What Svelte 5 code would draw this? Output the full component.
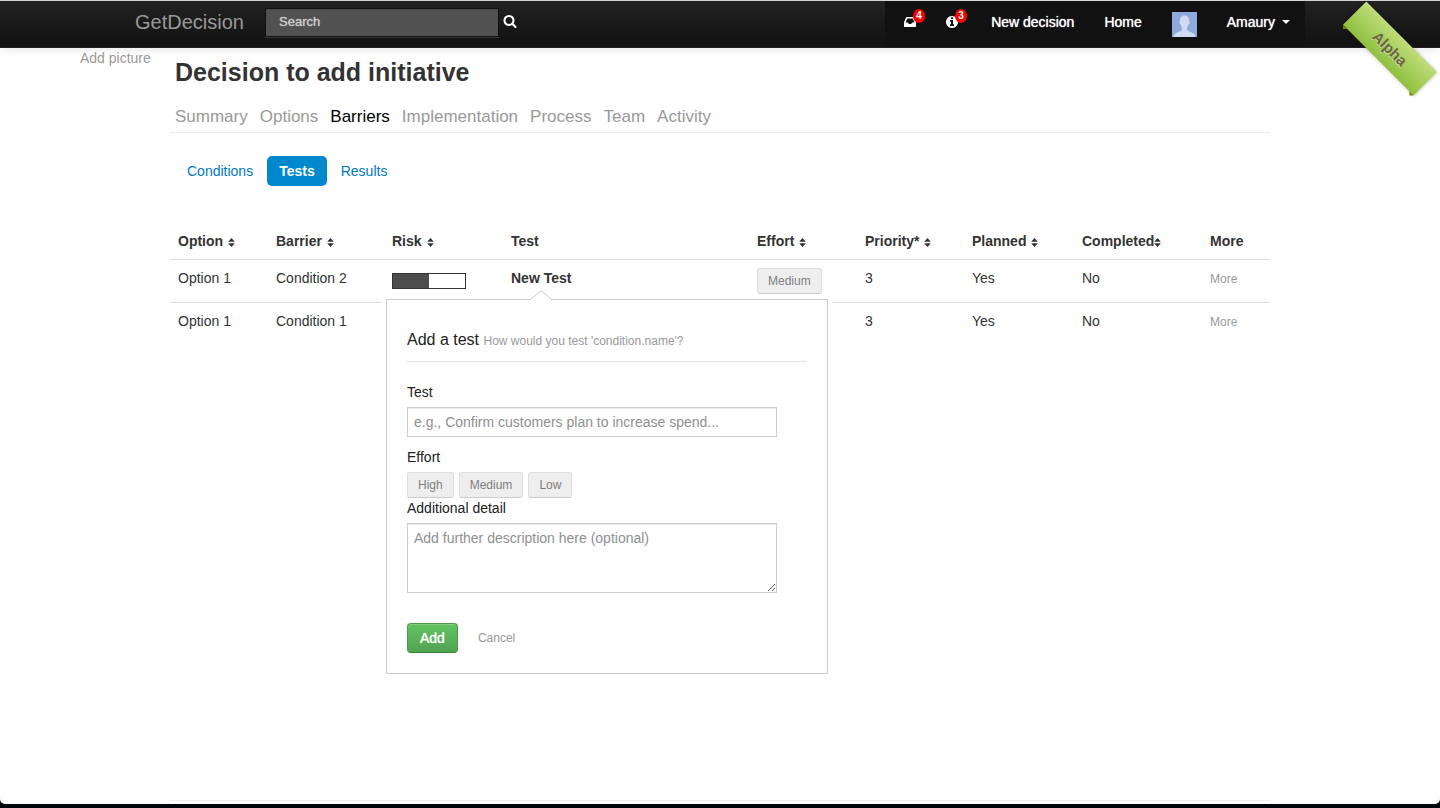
<script>
  const sections = ['Summary', 'Options', 'Barriers', 'Implementation', 'Process', 'Team', 'Activity'];
  const views = ['Conditions', 'Tests', 'Results'];
  const efforts = ['High', 'Medium', 'Low'];

  const columns = [
    { key: 'option', label: 'Option', sortable: true },
    { key: 'barrier', label: 'Barrier', sortable: true },
    { key: 'risk', label: 'Risk', sortable: true },
    { key: 'test', label: 'Test' },
    { key: 'effort', label: 'Effort', sortable: true },
    { key: 'priority', label: 'Priority*', sortable: true },
    { key: 'planned', label: 'Planned', sortable: true },
    { key: 'completed', label: 'Completed', sortable: true, tight: true },
    { key: 'more', label: 'More' }
  ];

  const rows = [
    { option: 'Option 1', barrier: 'Condition 2', risk: 50, test: 'New Test', effort: 'Medium', priority: 3, planned: 'Yes', completed: 'No' },
    { option: 'Option 1', barrier: 'Condition 1', priority: 3, planned: 'Yes', completed: 'No' }
  ];

  let section = $state('Barriers');
  let view = $state('Tests');
</script>

<div class="page">
  <header class="navbar">
    <div class="bar">
      <a class="brand" href="#home">GetDecision</a>
      <form class="search" onsubmit={(e) => e.preventDefault()}>
        <input type="text" placeholder="Search" aria-label="Search" />
        <button aria-label="Submit search">
          <svg viewBox="0 0 1792 1792" width="14" height="14"><path d="M1216 832q0-185-131.500-316.500t-316.500-131.500-316.500 131.500-131.500 316.500 131.500 316.500 316.500 131.500 316.500-131.500 131.500-316.500zm512 832q0 52-38 90t-90 38q-54 0-90-38l-343-342q-179 124-399 124-143 0-273.500-55.500t-225-150-150-225-55.500-273.500 55.500-273.500 150-225 225-150 273.500-55.500 273.500 55.500 225 150 150 225 55.500 273.500q0 220-124 399l343 343q37 37 37 90z" /></svg>
        </button>
      </form>
      <nav class="menu" aria-label="Account">
        <a class="inbox" href="#inbox" aria-label="Inbox">
          <svg viewBox="128 0 1536 1792" width="12" height="14"><path d="M1151 960h316q-1-3-2.500-8t-2.500-8l-212-496h-708l-212 496q-1 2-2.500 8t-2.500 8h316l95 192h320zm513 30v482q0 26-19 45t-45 19h-1408q-26 0-45-19t-19-45v-482q0-62 25-123l238-552q10-25 36.500-42t52.500-17h832q26 0 52.500 17t36.500 42l238 552q25 61 25 123z" /></svg>
          <span class="badge">4</span>
        </a>
        <a class="info" href="#notices" aria-label="Notices">
          <svg viewBox="128 0 1536 1792" width="12" height="14"><path d="M1152 1376v-160q0-14-9-23t-23-9h-96v-512q0-14-9-23t-23-9h-320q-14 0-23 9t-9 23v160q0 14 9 23t23 9h96v320h-96q-14 0-23 9t-9 23v160q0 14 9 23t23 9h448q14 0 23-9t9-23zm-128-896v-160q0-14-9-23t-23-9h-192q-14 0-23 9t-9 23v160q0 14 9 23t23 9h192q14 0 23-9t9-23zm640 416q0 209-103 385.500t-279.500 279.500-385.500 103-385.500-103-279.500-279.500-103-385.500 103-385.500 279.500-279.500 385.500-103 385.500 103 279.500 279.500 103 385.500z" /></svg>
          <span class="badge">3</span>
        </a>
        <a href="#new">New decision</a>
        <a href="#home">Home</a>
        <a class="avatar" href="#profile" aria-label="Profile">
          <svg viewBox="0 0 25 25" width="25" height="25">
            <rect width="25" height="25" fill="#8faadc" />
            <path fill="#d0dbef" d="M12.500 3.500c3 0 4.700 2.100 4.700 5 0 .6.500.8.400 1.700-.1 1-.7 1.400-1 2-.4 1.400-1 2.300-1.600 3v2.300c.4 1.500 2.200 2 4.300 2.800 2.200.8 3.800 2 4.300 4.700H1.400c.5-2.700 2.100-3.900 4.300-4.700 2.100-.8 3.900-1.300 4.300-2.800v-2.300c-.6-.7-1.200-1.600-1.600-3-.3-.6-.9-1-1-2-.1-.9.400-1.100.4-1.700 0-2.900 1.700-5 4.700-5z" />
          </svg>
        </a>
        <a class="user" href="#account">Amaury <span class="caret"></span></a>
      </nav>
    </div>
  </header>

  <div class="ribbon">Alpha</div>

  <div class="content">
    <aside><a href="#picture">Add picture</a></aside>
    <main>
      <h1>Decision to add initiative</h1>
      <nav class="tabs" aria-label="Sections">
        {#each sections as name}
          <a href="#{name}" class:active={name === section} onclick={() => (section = name)}>{name}</a>
        {/each}
      </nav>
      <nav class="pills" aria-label="Views">
        {#each views as name}
          <a href="#{name}" class:active={name === view} onclick={() => (view = name)}>{name}</a>
        {/each}
      </nav>

      <table>
        <thead>
          <tr>
            {#each columns as column}
              <th class={column.key} scope="col">
                {#if column.sortable}
                  <button class="sort" class:tight={column.tight}>{column.label}<svg viewBox="0 0 7 9" width="7" height="9"><path d="M3.500 0 6.800 3.700H.2zM3.500 9 .2 5.300h6.600z" /></svg></button>
                {:else}
                  {column.label}
                {/if}
              </th>
            {/each}
          </tr>
        </thead>
        <tbody>
          {#each rows as row}
            <tr>
              <td>{row.option}</td>
              <td>{row.barrier}</td>
              <td>
                {#if row.risk}
                  <div class="meter" role="img" aria-label="Risk"><span style="width: {row.risk}%"></span></div>
                {/if}
              </td>
              <td>
                {#if row.test}
                  <div class="anchor">
                    <strong>{row.test}</strong>
                    <form class="popover" onsubmit={(e) => e.preventDefault()}>
                      <svg class="arrow" viewBox="0 0 24 11" width="24" height="11"><path d="M0 11 1 10 12 .8 23 10l1 1z" fill="#fff" /><path d="M1 9.800 12 .8l11 9" fill="none" stroke="#ccc" /></svg>
                      <h2>Add a test <small>How would you test 'condition.name'?</small></h2>
                      <label for="test-name">Test</label>
                      <input id="test-name" type="text" placeholder="e.g., Confirm customers plan to increase spend..." />
                      <div class="label" id="effort-label">Effort</div>
                      <div class="choices" role="group" aria-labelledby="effort-label">
                        {#each efforts as effort}
                          <button type="button" class="small">{effort}</button>
                        {/each}
                      </div>
                      <label for="test-detail">Additional detail</label>
                      <textarea id="test-detail" placeholder="Add further description here (optional)"></textarea>
                      <div class="actions">
                        <button class="add">Add</button>
                        <a href="#cancel">Cancel</a>
                      </div>
                    </form>
                  </div>
                {/if}
              </td>
              <td>
                {#if row.effort}<button class="small">{row.effort}</button>{/if}
              </td>
              <td>{row.priority}</td>
              <td>{row.planned}</td>
              <td>{row.completed}</td>
              <td><a class="more-link" href="#more">More</a></td>
            </tr>
          {/each}
        </tbody>
      </table>
      <footer></footer>
    </main>
  </div>
</div>

<style>
  :global(body) {
    background: #02050d;
  }

  .page {
    position: relative;
    display: flex;
    flex-direction: column;
    box-sizing: border-box;
    min-height: calc(100vh - 4px);
    overflow: hidden;
    background: #fff;
    border-radius: 0 0 5px 5px;
    color: #333;
    font: 14px/20px "Liberation Sans", Arial, sans-serif;
  }

  a {
    color: #999;
    text-decoration: none;
  }

  button,
  input,
  textarea {
    box-sizing: border-box;
    margin: 0;
    font: inherit;
  }

  button {
    cursor: pointer;
  }

  svg {
    display: block;
    fill: currentColor;
  }

  /* Navigation bar */
  .navbar {
    border-top: 1px solid #d0d6d4;
    border-bottom: 1px solid #252025;
    background: linear-gradient(#222, #111);
    box-shadow: 0 1px 10px rgba(0, 0, 0, 0.1);
  }

  .bar {
    display: flex;
    align-items: stretch;
    max-width: 1170px;
    height: 46px;
    margin: 0 auto;
  }

  .brand {
    width: 130px;
    padding-top: 11px;
    font-size: 20px;
  }

  .search {
    display: flex;
    align-items: flex-start;
    gap: 4px;
    padding-top: 7px;
  }

  .search input {
    width: 234px;
    height: 29px;
    padding: 0 13px 2px;
    border: 1px solid #111;
    border-radius: 0;
    background: #515151;
    box-shadow: inset 0 1px 2px rgba(0, 0, 0, 0.1), 0 1px 0 rgba(255, 255, 255, 0.15);
    color: #fff;
    font-size: 13px;
  }

  .search input::placeholder {
    color: #ccc;
    opacity: 1;
    text-shadow: 0 0 1px #ccc;
  }

  .search button {
    padding: 6px 0;
    border: 0;
    background: none;
    color: #fff;
  }

  .menu {
    display: flex;
    margin-left: auto;
    padding-left: 4px;
    background: #111;
  }

  .menu a {
    position: relative;
    padding: 11px 15px 0;
    color: #fff;
    text-shadow: 0 0 1px #fff;
  }

  .menu .inbox,
  .menu .info {
    padding-top: 14px;
  }

  .info {
    width: 15px;
  }

  .badge {
    position: absolute;
    top: 8px;
    left: 24px;
    width: 12px;
    height: 14px;
    border-radius: 50%;
    background: #f00;
    font-size: 10px;
    font-weight: bold;
    line-height: 14px;
    text-align: center;
    text-shadow: none;
  }

  .menu .user {
    display: flex;
    gap: 7px;
  }

  .caret {
    margin-top: 8px;
    height: 0;
    border: 4px solid transparent;
    border-top-color: #fff;
    border-bottom: 0;
  }

  /* Corner ribbon */
  .ribbon {
    position: absolute;
    top: 32px;
    right: 0;
    width: 100px;
    height: 33px;
    transform: rotate(45deg);
    background: linear-gradient(#bfdc7a, #8ec040);
    box-shadow: 0 0 4px rgba(0, 0, 0, 0.3);
    color: #6a6340;
    font: bold 15px/33px "Liberation Sans", Arial, sans-serif;
    text-align: center;
    text-shadow: 0 1px 0 rgba(255, 255, 255, 0.6);
  }

  .ribbon::before,
  .ribbon::after {
    content: "";
    position: absolute;
    top: 100%;
    left: 0;
    border: 3px solid transparent;
    border-top-color: #6e8900;
    border-bottom: 0;
  }

  .ribbon::after {
    right: 0;
    left: auto;
  }

  /* Page body */
  .content {
    display: flex;
    flex: 1;
    width: 100%;
    max-width: 1280px;
    margin: 0 auto;
  }

  aside {
    flex: none;
    width: 90px;
  }

  main {
    display: flex;
    flex: 1;
    flex-direction: column;
    margin-right: 90px;
  }

  h1 {
    margin: 4px 0 15px;
    padding-left: 5px;
    font-size: 25px;
    line-height: 40px;
  }

  .tabs {
    display: flex;
    gap: 12px;
    padding: 0 5px 5px;
    border-bottom: 1px solid #eee;
    font-size: 17px;
  }

  .tabs .active {
    color: #000;
  }

  .pills {
    display: flex;
    gap: 2px;
    margin: 23px 0 37px;
    padding-left: 5px;
  }

  .pills a {
    padding: 5px 12px;
    border-radius: 5px;
    color: #0077c4;
  }

  .pills .active {
    background: #08c;
    color: #fff;
    font-weight: bold;
  }

  /* Tests table */
  table {
    width: 100%;
    table-layout: fixed;
    border-collapse: separate;
    border-spacing: 0;
  }

  th,
  td {
    padding: 8px;
    text-align: left;
    vertical-align: top;
  }

  td {
    border-top: 1px solid #ddd;
  }

  .option { width: 82px; }
  .barrier { width: 100px; }
  .risk { width: 103px; }
  .effort { width: 92px; }
  .priority { width: 91px; }
  .planned { width: 94px; }
  .completed { width: 112px; }
  .more { width: 52px; }

  .sort {
    display: flex;
    align-items: center;
    gap: 5px;
    padding: 0;
    border: 0;
    background: none;
    color: inherit;
  }

  .sort svg {
    margin-top: 3px;
  }

  .tight {
    gap: 0;
  }

  .meter {
    box-sizing: border-box;
    width: 74px;
    height: 16px;
    margin-top: 5px;
    border: 1px solid #333;
  }

  .meter span {
    display: block;
    height: 100%;
    background: #4d4d4d;
  }

  .small {
    display: block;
    height: 26px;
    padding: 0 10px;
    border: 1px solid #ddd;
    border-bottom-color: #ccc;
    border-radius: 3px;
    background: #eee;
    color: #808080;
    font-size: 12px;
  }

  .more-link,
  .actions a {
    font-size: 12px;
  }

  /* Add-test popover */
  .anchor {
    position: relative;
  }

  .popover {
    position: absolute;
    z-index: 1;
    top: 31px;
    left: -125px;
    box-sizing: border-box;
    width: 442px;
    padding: 30px 20px 20px;
    border: 1px solid #ccc;
    background: #fff;
    box-shadow: 0 0 0 4px #fff;
    color: #222;
  }

  .arrow {
    position: absolute;
    top: -10px;
    left: 142px;
  }

  h2 {
    margin: 0 0 20px;
    padding-bottom: 10px;
    border-bottom: 1px solid #e5e5e5;
    font-size: 16px;
    font-weight: normal;
    line-height: 20px;
  }

  small {
    color: #999;
    font-size: 12px;
  }

  label,
  .label {
    display: block;
    margin-bottom: 5px;
  }

  .popover input,
  textarea {
    display: block;
    width: 370px;
    padding: 4px 6px;
    border: 1px solid #ccc;
    border-radius: 0;
    background: #fff;
    box-shadow: inset 0 1px 1px rgba(0, 0, 0, 0.08);
  }

  .popover input {
    height: 30px;
    margin-bottom: 10px;
  }

  textarea {
    height: 70px;
    resize: vertical;
  }

  .popover ::placeholder {
    color: #909090;
    opacity: 1;
  }

  .choices {
    display: flex;
    gap: 5px;
  }

  .actions {
    display: flex;
    align-items: center;
    gap: 20px;
    margin-top: 30px;
  }

  .add {
    height: 30px;
    padding: 0 12px;
    border: 1px solid #4a9c4a;
    border-bottom-color: #3c823c;
    border-radius: 4px;
    background: linear-gradient(#62c462, #51a351);
    box-shadow: inset 0 1px 0 rgba(255, 255, 255, 0.2);
    color: #fff;
    text-shadow: 0 0 1px #fff;
  }

  footer {
    height: 3px;
    margin-top: auto;
    border-top: 1px solid #eee;
  }
</style>
